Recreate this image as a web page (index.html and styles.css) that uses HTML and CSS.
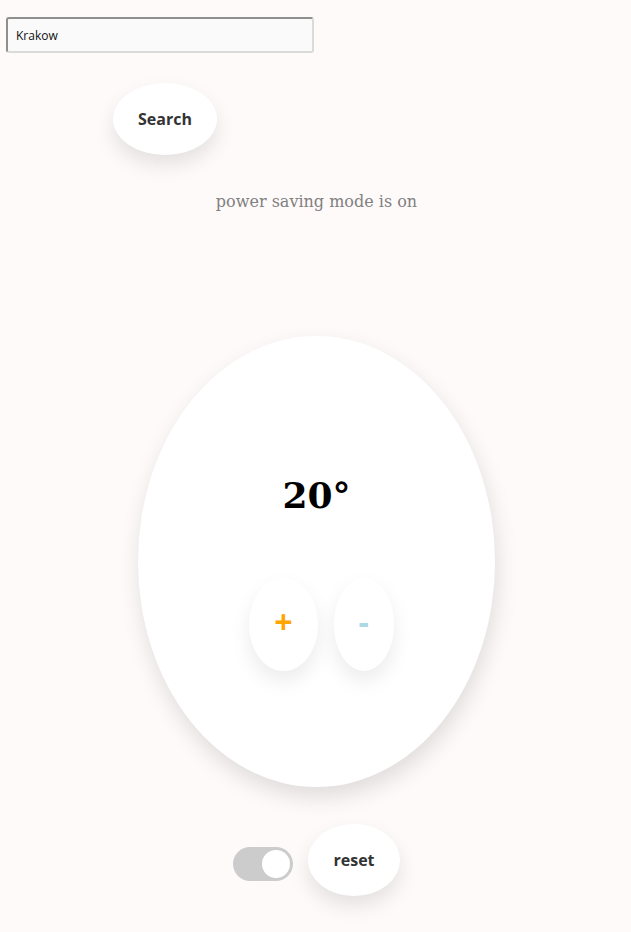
FILE: index.html
```html
<!DOCTYPE html>
<html lang="en">
<head>
<meta charset="utf-8">
<title>Thermostat</title>
<link rel="stylesheet" href="styles.css">
</head>
<body>
<div class="app">
  <div class="search">
    <input class="city" type="text" value="Krakow">
    <button class="pill search-btn">Search</button>
  </div>
  <p class="status">power saving mode is on</p>
  <div class="dial-wrap">
    <div class="dial">
      <h1 class="temp">20°</h1>
      <div class="controls">
        <button class="pill step plus">+</button>
        <button class="pill step minus">-</button>
      </div>
    </div>
  </div>
  <div class="footer">
    <label class="switch"><span class="knob"></span></label>
    <button class="pill reset-btn">reset</button>
  </div>
</div>
</body>
</html>
```

FILE: styles.css
```css
html, body {
  margin: 0;
  padding: 0;
  background: #fffafa;
}

.app {
  display: flex;
  flex-direction: column;
  padding-top: 17px;
  padding-bottom: 40px;
}

.search {
  display: flex;
  flex-direction: column;
  align-items: flex-start;
  padding-left: 6px;
}

.city {
  box-sizing: border-box;
  width: 308px;
  height: 36px;
  margin: 0;
  padding: 0 8px;
  font-family: "Open Sans", sans-serif;
  font-size: 12px;
  color: #111;
  background: #fafafa;
  border-style: solid;
  border-width: 2px;
  border-color: #8f8f8f #dadada #dadada #8f8f8f;
  border-radius: 3px;
  outline: none;
}

.pill {
  font-family: "Open Sans", sans-serif;
  font-weight: 700;
  font-size: 16px;
  line-height: normal;
  color: #333;
  background: #fff;
  border: none;
  border-radius: 50%;
  padding: 25px;
  margin: 0;
  box-shadow: 0 10px 20px rgba(0, 0, 0, 0.1);
}

.search-btn {
  margin-top: 30px;
  margin-left: 107px;
}

.status {
  margin: 37px 0 0;
  padding-left: 2px;
  text-align: center;
  font-family: "DejaVu Serif", serif;
  font-size: 16px;
  line-height: normal;
  color: #808080;
}

.dial-wrap {
  display: flex;
  justify-content: center;
  margin-top: 125px;
  padding-left: 2px;
}

.dial {
  box-sizing: border-box;
  width: 357px;
  height: 451px;
  border-radius: 50%;
  background: #fff;
  box-shadow: 2px 10px 22px rgba(0, 0, 0, 0.12);
  display: flex;
  flex-direction: column;
  align-items: center;
  padding-top: 138px;
}

.temp {
  margin: 0;
  font-family: "DejaVu Serif", serif;
  font-weight: 700;
  font-size: 36px;
  line-height: normal;
  color: #000;
}

.controls {
  display: flex;
  gap: 16px;
  margin-top: 62px;
  padding-left: 10px;
}

.step {
  font-size: 32px;
  padding: 22px 25px 28px;
  box-shadow: 0 10px 20px rgba(0, 0, 0, 0.08);
}

.plus {
  color: #ffa500;
}

.minus {
  color: #add8e6;
}

.footer {
  display: flex;
  justify-content: center;
  align-items: flex-start;
  gap: 15px;
  margin-top: 37px;
  padding-left: 2px;
}

.switch {
  position: relative;
  display: block;
  width: 60px;
  height: 34px;
  margin-top: 23px;
  border-radius: 34px;
  background: #ccc;
}

.knob {
  position: absolute;
  top: 3px;
  right: 3px;
  width: 28px;
  height: 28px;
  border-radius: 50%;
  background: #fff;
}
```
